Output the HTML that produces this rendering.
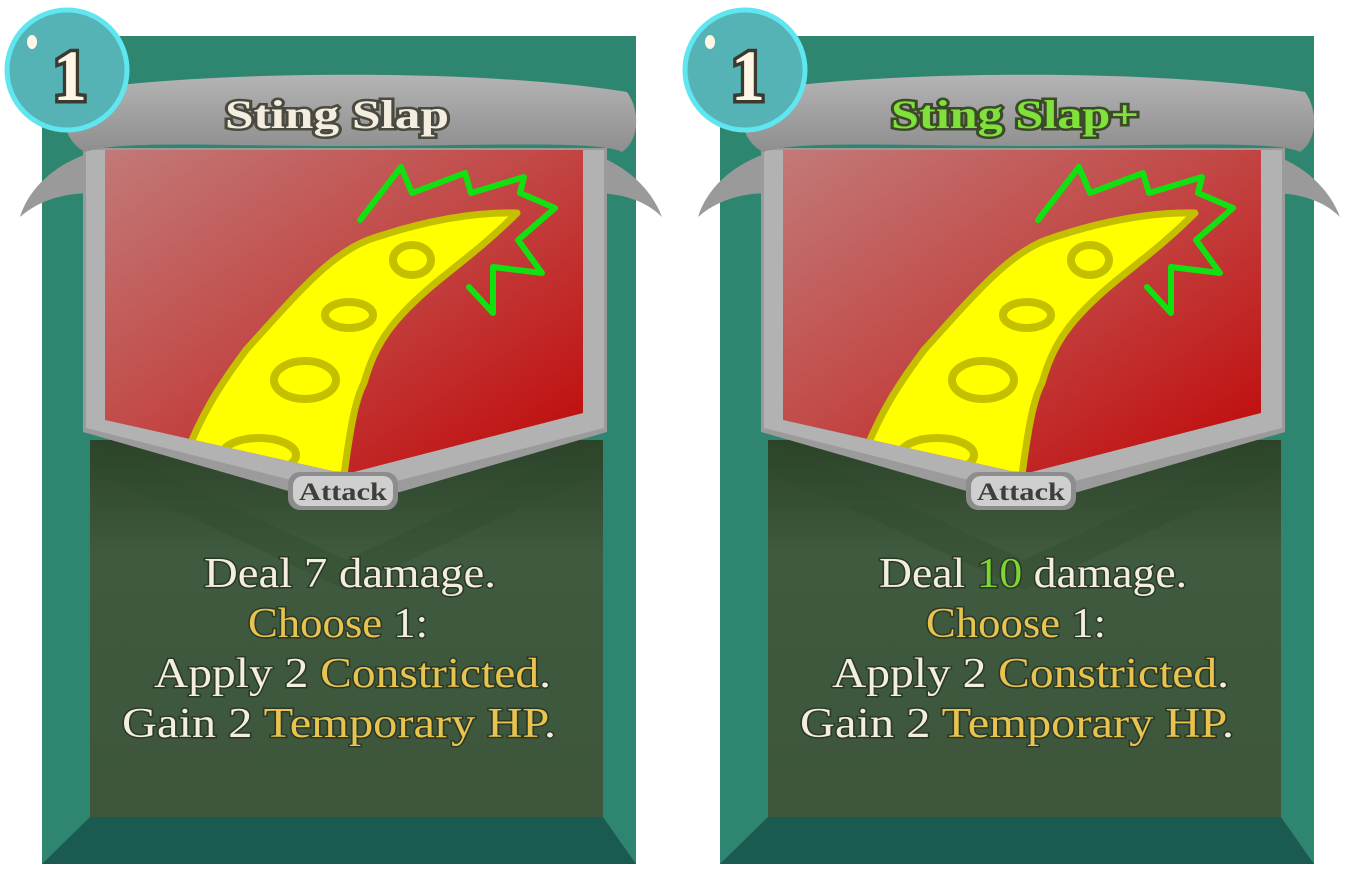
<!DOCTYPE html>
<html><head><meta charset="utf-8"><style>
html,body{margin:0;padding:0;background:#fff;}
svg{display:block;}
.t{font-family:"Liberation Serif",serif;}
</style></head><body>
<svg width="1356" height="874" viewBox="0 0 1356 874" xmlns="http://www.w3.org/2000/svg">
<defs>
<linearGradient id="red" x1="0" y1="0" x2="1" y2="1">
<stop offset="0" stop-color="#c27a78"/><stop offset="0.45" stop-color="#c24a48"/><stop offset="1" stop-color="#c00606"/>
</linearGradient>
<linearGradient id="pan" x1="0" y1="0" x2="0" y2="1">
<stop offset="0" stop-color="#2c4329"/><stop offset="0.3" stop-color="#3f5a3e"/><stop offset="1" stop-color="#3d563c"/>
</linearGradient>
<linearGradient id="ban" x1="0" y1="0" x2="0" y2="1">
<stop offset="0" stop-color="#b4b4b4"/><stop offset="1" stop-color="#8e8e8e"/>
</linearGradient>
<clipPath id="ac"><path d="M105,150 L583,150 L583,413 L346,474 L105,420 Z"/></clipPath>
<g id="card">
<rect x="42" y="36" width="594" height="828" fill="#2f8670"/>
<polygon points="42,864 90,817 603,817 636,864" fill="#1b5a50"/>
<polygon points="90,440 603,440 603,817 90,817" fill="url(#pan)"/>
<path d="M90,440 L346,560 L603,440 L603,470 L346,590 L90,470 Z" fill="#2e4a2c" opacity="0.35"/>
<path d="M100,150 C60,160 30,185 20,217 C45,195 80,190 110,195 Z" fill="#9a9a9a"/>
<path d="M580,150 C620,160 650,185 662,217 C640,195 605,190 575,195 Z" fill="#9a9a9a"/>
<path d="M83,148 L607,148 L607,432 L400,492 L346,500 L292,492 L83,432 Z" fill="#9b9b9b"/>
<path d="M86,150 L604,150 L604,428 L346,494 L86,428 Z" fill="#c9c9c9" opacity="0.5"/>
<path d="M105,150 L583,150 L583,413 L346,474 L105,420 Z" fill="url(#red)"/>
<g clip-path="url(#ac)">
<path d="M517,213 C470,212 420,222 368,240 C330,255 300,290 246,350 C220,385 200,415 180,470 L344,475 C350,430 355,400 364,383 C375,345 390,320 439,280 C470,255 490,240 517,213 Z" fill="#ffff00" stroke="#c4c000" stroke-width="7" stroke-linejoin="round"/>
<g fill="none" stroke="#c4c000" stroke-width="8">
<ellipse cx="412" cy="260" rx="19" ry="15"/>
<ellipse cx="349" cy="315" rx="24" ry="13"/>
<ellipse cx="305" cy="380" rx="31" ry="19"/>
<ellipse cx="259" cy="455" rx="37" ry="17"/>
</g>
</g>
<polyline points="360,220 401,167 412,193 465,173 471,193 524,177 520,193 555,208 518,240 542,273 493,267 493,313 469,287" fill="none" stroke="#11e011" stroke-width="6" stroke-linejoin="round" stroke-linecap="round"/>
<path d="M66,92 C200,70 480,68 627,92 C640,110 640,140 622,152 C600,140 480,146 346,146 C220,146 120,140 85,152 C62,140 60,110 66,92 Z" fill="url(#ban)"/>
<rect x="288" y="472" width="110" height="38" rx="12" fill="#8d8d8d"/>
<rect x="293" y="476" width="100" height="30" rx="10" fill="#cfcfcf"/>
<text x="343" y="500" text-anchor="middle" class="t" font-size="25" font-weight="bold" fill="#3e3e3a" textLength="88" lengthAdjust="spacingAndGlyphs">Attack</text>
<circle cx="67" cy="70" r="60" fill="#55b2b5" stroke="#5fe6ef" stroke-width="5"/>
<ellipse cx="32" cy="42" rx="5" ry="7" fill="#fff6e6"/>
<text x="70" y="100" text-anchor="middle" class="t" font-size="72" font-weight="bold" fill="#fff6e6" stroke="#3b3a30" stroke-width="7" paint-order="stroke" textLength="34" lengthAdjust="spacingAndGlyphs">1</text>
</g>
</defs>

<use href="#card"/>
<text x="337" y="128" text-anchor="middle" class="t" font-size="40" font-weight="bold" fill="#f4eee0" stroke="#4b4a40" stroke-width="5" paint-order="stroke" textLength="224" lengthAdjust="spacingAndGlyphs">Sting Slap</text>
<g class="t" font-size="42" stroke="#2b3a28" stroke-width="3" paint-order="stroke">
<text x="204" y="587" fill="#f4eee0" textLength="292" lengthAdjust="spacingAndGlyphs">Deal 7 damage.</text>
<text x="248" y="637" fill="#f4eee0" textLength="180" lengthAdjust="spacingAndGlyphs"><tspan fill="#e9c350">Choose</tspan> 1:</text>
<text x="154" y="687" fill="#f4eee0" textLength="397" lengthAdjust="spacingAndGlyphs">Apply 2 <tspan fill="#e9c350">Constricted</tspan>.</text>
<text x="122" y="737" fill="#f4eee0" textLength="434" lengthAdjust="spacingAndGlyphs">Gain 2 <tspan fill="#e9c350">Temporary HP</tspan>.</text>
</g>

<g transform="translate(678,0)">
<use href="#card"/>
<text x="337" y="128" text-anchor="middle" class="t" font-size="40" font-weight="bold" fill="#7fe13a" stroke="#3d4a2a" stroke-width="5" paint-order="stroke" textLength="248" lengthAdjust="spacingAndGlyphs">Sting Slap+</text>
<g class="t" font-size="42" stroke="#2b3a28" stroke-width="3" paint-order="stroke">
<text x="201" y="587" fill="#f4eee0" textLength="308" lengthAdjust="spacingAndGlyphs">Deal <tspan fill="#7dd634">10</tspan> damage.</text>
<text x="248" y="637" fill="#f4eee0" textLength="180" lengthAdjust="spacingAndGlyphs"><tspan fill="#e9c350">Choose</tspan> 1:</text>
<text x="154" y="687" fill="#f4eee0" textLength="397" lengthAdjust="spacingAndGlyphs">Apply 2 <tspan fill="#e9c350">Constricted</tspan>.</text>
<text x="122" y="737" fill="#f4eee0" textLength="434" lengthAdjust="spacingAndGlyphs">Gain 2 <tspan fill="#e9c350">Temporary HP</tspan>.</text>
</g>
</g>
</svg>
</body></html>
